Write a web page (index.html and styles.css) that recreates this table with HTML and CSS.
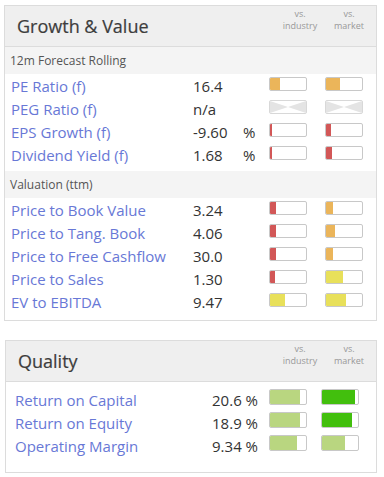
FILE: index.html
```html
<!DOCTYPE html>
<html>
<head>
<meta charset="utf-8">
<link rel="stylesheet" href="styles.css">
</head>
<body>
<div class="page">
  <div class="card card-gv">
    <div class="card-head">
      <h2 class="title">Growth &amp; Value</h2>
      <div class="vs">vs.<br>industry</div>
      <div class="vs">vs.<br>market</div>
    </div>
    <div class="section">12m Forecast Rolling</div>
    <div class="rows rows-first">
      <div class="row">
        <span class="label">PE Ratio (f)</span><span class="val">16.4</span><span class="pct"></span>
        <span class="bar"><i class="fill orange" style="width:10px"></i></span>
        <span class="bar"><i class="fill orange" style="width:14px"></i></span>
      </div>
      <div class="row">
        <span class="label">PEG Ratio (f)</span><span class="val">n/a</span><span class="pct"></span>
        <span class="bar na"><svg width="36" height="12" viewBox="0 0 36 12"><polygon points="0,0 18,6 0,12" fill="#e4e4e4"/><polygon points="36,0 18,6 36,12" fill="#e4e4e4"/></svg></span>
        <span class="bar na"><svg width="36" height="12" viewBox="0 0 36 12"><polygon points="0,0 18,6 0,12" fill="#e4e4e4"/><polygon points="36,0 18,6 36,12" fill="#e4e4e4"/></svg></span>
      </div>
      <div class="row">
        <span class="label">EPS Growth (f)</span><span class="val">-9.60</span><span class="pct">%</span>
        <span class="bar"><i class="fill red" style="width:2px"></i></span>
        <span class="bar"><i class="fill red" style="width:5px"></i></span>
      </div>
      <div class="row">
        <span class="label">Dividend Yield (f)</span><span class="val">1.68</span><span class="pct">%</span>
        <span class="bar"><i class="fill red" style="width:2px"></i></span>
        <span class="bar"><i class="fill red" style="width:6px"></i></span>
      </div>
    </div>
    <div class="section">Valuation (ttm)</div>
    <div class="rows rows-last">
      <div class="row">
        <span class="label">Price to Book Value</span><span class="val">3.24</span><span class="pct"></span>
        <span class="bar"><i class="fill red" style="width:6px"></i></span>
        <span class="bar"><i class="fill orange" style="width:7px"></i></span>
      </div>
      <div class="row">
        <span class="label">Price to Tang. Book</span><span class="val">4.06</span><span class="pct"></span>
        <span class="bar"><i class="fill red" style="width:6px"></i></span>
        <span class="bar"><i class="fill orange" style="width:9px"></i></span>
      </div>
      <div class="row">
        <span class="label">Price to Free Cashflow</span><span class="val">30.0</span><span class="pct"></span>
        <span class="bar"><i class="fill red" style="width:6px"></i></span>
        <span class="bar"><i class="fill orange" style="width:7px"></i></span>
      </div>
      <div class="row">
        <span class="label">Price to Sales</span><span class="val">1.30</span><span class="pct"></span>
        <span class="bar"><i class="fill red" style="width:5px"></i></span>
        <span class="bar"><i class="fill yellow" style="width:17px"></i></span>
      </div>
      <div class="row">
        <span class="label">EV to EBITDA</span><span class="val">9.47</span><span class="pct"></span>
        <span class="bar"><i class="fill yellow" style="width:15px"></i></span>
        <span class="bar"><i class="fill yellow" style="width:20px"></i></span>
      </div>
    </div>
  </div>

  <div class="card card-q">
    <div class="card-head">
      <h2 class="title">Quality</h2>
      <div class="vs">vs.<br>industry</div>
      <div class="vs">vs.<br>market</div>
    </div>
    <div class="qrows">
      <div class="qrow">
        <span class="qlabel">Return on Capital</span><span class="qval">20.6 %</span>
        <span class="qbar"><i class="fill lgreen" style="width:30px"></i></span>
        <span class="qbar"><i class="fill green" style="width:33px"></i></span>
      </div>
      <div class="qrow">
        <span class="qlabel">Return on Equity</span><span class="qval">18.9 %</span>
        <span class="qbar"><i class="fill lgreen" style="width:30px"></i></span>
        <span class="qbar"><i class="fill green" style="width:30px"></i></span>
      </div>
      <div class="qrow">
        <span class="qlabel">Operating Margin</span><span class="qval">9.34 %</span>
        <span class="qbar"><i class="fill lgreen" style="width:27px"></i></span>
        <span class="qbar"><i class="fill lgreen" style="width:23px"></i></span>
      </div>
    </div>
  </div>
</div>
</body>
</html>
```
FILE: styles.css
```css
body {
  margin: 0;
  background: #fff;
  font-family: "Open Sans", sans-serif;
  color: #333;
}
.page {
  padding-top: 5px;
}
.card {
  box-sizing: border-box;
  border: 1px solid #dcdcdc;
  background: #fff;
}
.card-gv {
  margin-left: 4px;
  width: 373px;
  height: 316px;
}
.card-q {
  margin-left: 5px;
  margin-top: 19px;
  width: 372px;
  height: 133px;
}
.card-head {
  display: flex;
  align-items: flex-start;
  height: 40px;
  background: #efefef;
  border-bottom: 1px solid #dcdcdc;
  padding-right: 5px;
}
.title {
  flex: 1;
  margin: 0;
  padding: 7px 0 0 12px;
  font-size: 18px;
  line-height: 27px;
  font-weight: 400;
  color: #3d3d3d;
  -webkit-text-stroke: 0.2px #3d3d3d;
}
.vs {
  width: 44px;
  margin-left: 5px;
  padding-top: 2px;
  font-size: 9px;
  line-height: 12px;
  color: #999;
  text-align: center;
}
.section {
  height: 27px;
  line-height: 27px;
  padding-left: 5px;
  font-size: 12px;
  color: #555;
  background: #f4f4f4;
}
.rows {
  padding-top: 1px;
}
.rows-first {
  padding-bottom: 4px;
}
.rows-last {
  padding-bottom: 6px;
}
.row {
  display: flex;
  align-items: flex-start;
  height: 23px;
  line-height: 23px;
  font-size: 15px;
  padding-left: 6px;
}
.label {
  width: 182px;
  color: #6878d6;
  white-space: nowrap;
}
.val {
  width: 50px;
  color: #333;
}
.pct {
  width: 26px;
  color: #333;
}
.bar,
.qbar {
  box-sizing: border-box;
  display: flex;
  width: 38px;
  height: 14px;
  margin-top: 2px;
  border: 1px solid #c8c8c8;
  border-radius: 2px;
  background: #fff;
  overflow: hidden;
}
.bar + .bar {
  margin-left: 18px;
}
.bar.na {
  border-color: #d8d8d8;
}
.bar.na svg {
  display: block;
}
.fill {
  display: block;
  height: 100%;
}
.orange { background: #ebb55a; }
.red { background: #d25757; }
.yellow { background: #e8e05a; }
.lgreen { background: #b9d680; }
.green { background: #42bf0d; }

.qrows {
  padding-top: 7px;
}
.qrow {
  display: flex;
  align-items: flex-start;
  height: 23px;
  line-height: 23px;
  font-size: 15px;
  padding-left: 9px;
}
.qlabel {
  width: 185px;
  color: #6878d6;
  white-space: nowrap;
}
.qval {
  width: 58px;
  margin-right: 11px;
  text-align: right;
  color: #333;
  white-space: nowrap;
}
.qbar {
  height: 16px;
  margin-top: 0;
}
.qbar + .qbar {
  margin-left: 14px;
}
```
